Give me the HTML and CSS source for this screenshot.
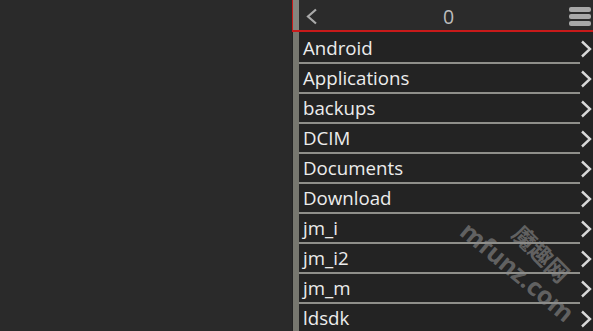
FILE: index.html
```html
<!DOCTYPE html>
<html>
<head>
    <meta name="viewport" content="width=device-width">
    <link rel="stylesheet" href="styles.css">
</head>
<body>
    <div class="screen">
        <div class="blank"></div>
        <div class="panel">
            <div class="header">
                <div class="strip"></div>
                <div class="bar">
                    <svg class="back" width="13" height="17" viewBox="0 0 13 17"><path d="M11 1.5 L3 8.5 L11 15.5" fill="none" stroke="#a9a9a9" stroke-width="2.2"/></svg>
                    <span class="count">0</span>
                    <div class="menu"><i></i><i></i><i></i></div>
                </div>
            </div>
            <div class="list">
                <div class="strip"></div>
                <div class="rows">
                    <div class="row"><span class="name">Android</span><span class="go"><svg width="12" height="18" viewBox="0 0 12 18"><path d="M2 1.5 L10 9 L2 16.5" fill="none" stroke="#d8d8d8" stroke-width="2.4"/></svg></span></div>
                    <div class="row"><span class="name">Applications</span><span class="go"><svg width="12" height="18" viewBox="0 0 12 18"><path d="M2 1.5 L10 9 L2 16.5" fill="none" stroke="#d8d8d8" stroke-width="2.4"/></svg></span></div>
                    <div class="row"><span class="name">backups</span><span class="go"><svg width="12" height="18" viewBox="0 0 12 18"><path d="M2 1.5 L10 9 L2 16.5" fill="none" stroke="#d8d8d8" stroke-width="2.4"/></svg></span></div>
                    <div class="row"><span class="name">DCIM</span><span class="go"><svg width="12" height="18" viewBox="0 0 12 18"><path d="M2 1.5 L10 9 L2 16.5" fill="none" stroke="#d8d8d8" stroke-width="2.4"/></svg></span></div>
                    <div class="row"><span class="name">Documents</span><span class="go"><svg width="12" height="18" viewBox="0 0 12 18"><path d="M2 1.5 L10 9 L2 16.5" fill="none" stroke="#d8d8d8" stroke-width="2.4"/></svg></span></div>
                    <div class="row"><span class="name">Download</span><span class="go"><svg width="12" height="18" viewBox="0 0 12 18"><path d="M2 1.5 L10 9 L2 16.5" fill="none" stroke="#d8d8d8" stroke-width="2.4"/></svg></span></div>
                    <div class="row"><span class="name">jm_i</span><span class="go"><svg width="12" height="18" viewBox="0 0 12 18"><path d="M2 1.5 L10 9 L2 16.5" fill="none" stroke="#d8d8d8" stroke-width="2.4"/></svg></span></div>
                    <div class="row"><span class="name">jm_i2</span><span class="go"><svg width="12" height="18" viewBox="0 0 12 18"><path d="M2 1.5 L10 9 L2 16.5" fill="none" stroke="#d8d8d8" stroke-width="2.4"/></svg></span></div>
                    <div class="row"><span class="name">jm_m</span><span class="go"><svg width="12" height="18" viewBox="0 0 12 18"><path d="M2 1.5 L10 9 L2 16.5" fill="none" stroke="#d8d8d8" stroke-width="2.4"/></svg></span></div>
                    <div class="row"><span class="name">ldsdk</span><span class="go"><svg width="12" height="18" viewBox="0 0 12 18"><path d="M2 1.5 L10 9 L2 16.5" fill="none" stroke="#d8d8d8" stroke-width="2.4"/></svg></span></div>
                </div>
            </div>
        </div>
    </div>
    <div class="mark mark_en">mfunz.com</div>
    <div class="mark mark_cn">魔趣网</div>
</body>
</html>
```

FILE: styles.css
```css
body {
    margin: 0;
    background: #2a2a2a;
    font-family: "Open Sans", "Noto Sans", sans-serif;
    overflow: hidden;
}
.screen {
    display: flex;
    height: 331px;
}
.blank {width: 292px}
.panel {
    flex: 1;
    display: flex;
    flex-direction: column;
    background: #232323;
}
.strip {width: 6px; background: #77776f}
.header {
    display: flex;
    height: 32px;
    border-left: 1px solid #c81a1a;
    border-bottom: 2px solid #c81a1a;
    background: #2b2b2b;
}
.header .strip {background: #85857f}
.bar {
    flex: 1;
    display: flex;
    align-items: center;
    justify-content: space-between;
    padding: 0 2px 0 6px;
}
.back {margin-top: 3px}
.count {
    color: #bdbdbd;
    font-size: 19.5px;
    margin: 3px 0 0 10px;
}
.menu {
    display: flex;
    flex-direction: column;
    gap: 2px;
    margin-top: 2px;
}
.menu i {
    display: block;
    width: 22px;
    height: 5px;
    border-radius: 2px;
    background: #a8a8a8;
}
.list {
    flex: 1;
    display: flex;
    padding-left: 1px;
}
.rows {flex: 1}
.row {
    display: flex;
    height: 30px;
}
.name {
    flex: 1;
    color: #ececec;
    font-size: 18.7px;
    line-height: 28px;
    padding: 2px 0 0 4px;
    margin-bottom: -2px;
    border-bottom: 2px solid #8f8f8a;
}
.go {
    width: 13px;
    display: flex;
    align-items: center;
    padding-top: 4px;
}
.mark {
    position: absolute;
    color: rgba(140, 140, 140, 0.6);
    font-weight: bold;
    transform: translate(-50%, -50%) rotate(40deg);
    white-space: nowrap;
}
.mark_en {
    left: 518px;
    top: 271px;
    font-size: 25px;
}
.mark_cn {
    left: 542px;
    top: 253px;
    font-size: 23px;
    font-family: "Noto Sans CJK SC", sans-serif;
    transform: translate(-50%, -50%) rotate(45deg);
}
```
